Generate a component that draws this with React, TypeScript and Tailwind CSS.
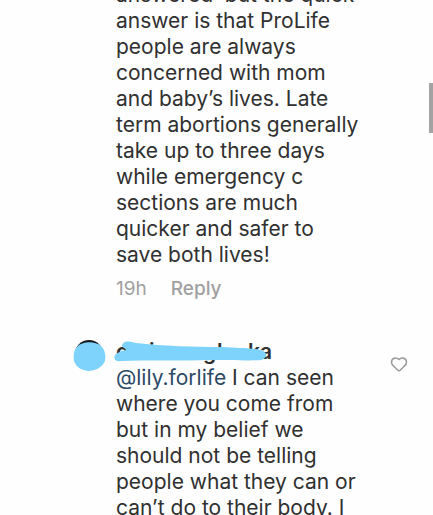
import { ReactNode } from "react";
import { Heart } from "lucide-react";

const firstComment = [
  "answered  but the quick",
  "answer is that ProLife",
  "people are always",
  "concerned with mom",
  "and baby’s lives. Late",
  "term abortions generally",
  "take up to three days",
  "while emergency c",
  "sections are much",
  "quicker and safer to",
  "save both lives!",
];

const secondComment = [
  "where you come from",
  "but in my belief we",
  "should not be telling",
  "people what they can or",
  "can’t do to their body. I",
];

const Line = ({ children }: { children: ReactNode }) => (
  <span className="block whitespace-pre">{children}</span>
);

const Avatar = () => (
  <svg viewBox="0 0 34 34" className="size-[34px] shrink-0" aria-hidden="true">
    <circle cx="16" cy="15" r="14" fill="#151b1f" />
    <path
      d="M4 8C9 2 22 2 28 7C32 10 34 19 31 24C28 29 21 32 15 32C8 31 3 28 1 22C0 16 1 11 4 8Z"
      fill="#7dd3fc"
    />
  </svg>
);

const HiddenName = () => (
  <div className="relative h-[26px] w-[156px] font-semibold">
    <div className="flex whitespace-pre">
      <span className="w-[33px]">c</span>
      <span className="w-[54px]">i</span>
      <span className="w-[14px]">g</span>
      <span className="w-[31px]">l</span>
      <span>ka</span>
    </div>
    <svg
      viewBox="0 0 156 26"
      className="absolute inset-0 size-full overflow-visible"
      aria-hidden="true"
    >
      <path
        d="M9 3C12 2 16 3 20 4C47 7 78 8 107 8C123 9 142 9 147 12C153 15 150 20 145 21C139 22 112 21 94 21C66 22 30 21 5 22C0 23 -3 20 -1 16C0 14 2 14 4 13C5 11 8 12 10 11C9 9 6 8 6 7C6 5 7 4 9 3Z"
        fill="#7dd3fc"
      />
    </svg>
  </div>
);

const App = () => {
  return (
    <main className="relative h-screen overflow-hidden bg-[#fefefe] font-['Inter','Liberation_Sans',sans-serif] text-[21px] leading-[26px] text-[#303030]">
      <article className="-mt-[18px] pl-[116px]">
        <p>
          {firstComment.map((line) => (
            <Line key={line}>{line}</Line>
          ))}
        </p>
        <footer className="mt-2 flex gap-6 text-[19px] text-[#a0a0a0]">
          <time>19h</time>
          <button type="button" className="font-medium">
            Reply
          </button>
        </footer>
      </article>

      <article className="mt-[37px] flex items-start pl-[73px] pr-[25px]">
        <Avatar />
        <div className="ml-[9px] flex-1">
          <HiddenName />
          <p>
            <Line>
              <a href="#" className="text-[#2b4a66]">
                @lily.forlife
              </a>{" "}
              I can seen
            </Line>
            {secondComment.map((line) => (
              <Line key={line}>{line}</Line>
            ))}
          </p>
        </div>
        <button type="button" aria-label="Like" className="mt-4">
          <Heart className="size-[18px] text-[#999999]" strokeWidth={2} />
        </button>
      </article>

      <div className="absolute right-0 top-[83px] h-[50px] w-1 bg-[#a3a3a3]" />
    </main>
  );
};

export default App;
